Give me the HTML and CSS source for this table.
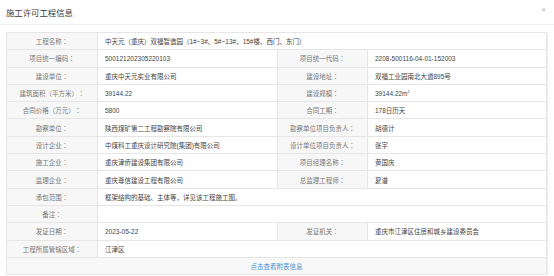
FILE: index.html
```html
<!DOCTYPE html>
<html lang="zh-CN">
<head>
<meta charset="utf-8">
<title>施工许可工程信息</title>
<link rel="stylesheet" href="styles.css">
</head>
<body>
<div class="dialog">
  <div class="dialog-head">
    <span class="dialog-title">施工许可工程信息</span>
    <span class="dialog-close">×</span>
  </div>
  <div class="dialog-body">
    <div class="info-grid">
      <div class="lbl">工程名称<span class="colon">：</span></div>
      <div class="val span3">中天元（重庆）双福智造园（1#~3#、5#~13#、15#楼、西门、东门）</div>

      <div class="lbl">项目统一编码<span class="colon">：</span></div>
      <div class="val">500121202305220103</div>
      <div class="lbl">项目统一代码<span class="colon">：</span></div>
      <div class="val">2208-500116-04-01-152003</div>

      <div class="lbl">建设单位<span class="colon">：</span></div>
      <div class="val">重庆中天元实业有限公司</div>
      <div class="lbl">建设地址<span class="colon">：</span></div>
      <div class="val">双福工业园南北大道895号</div>

      <div class="lbl">建筑面积（平方米）<span class="colon">：</span></div>
      <div class="val">39144.22</div>
      <div class="lbl">建设规模<span class="colon">：</span></div>
      <div class="val">39144.22m<sup>2</sup></div>

      <div class="lbl">合同价格（万元）<span class="colon">：</span></div>
      <div class="val">5800</div>
      <div class="lbl">合同工期<span class="colon">：</span></div>
      <div class="val">178日历天</div>

      <div class="lbl">勘察单位<span class="colon">：</span></div>
      <div class="val">陕西煤矿第二工程勘察院有限公司</div>
      <div class="lbl">勘察单位项目负责人<span class="colon">：</span></div>
      <div class="val">胡德计</div>

      <div class="lbl">设计企业<span class="colon">：</span></div>
      <div class="val">中煤科工重庆设计研究院(集团)有限公司</div>
      <div class="lbl">设计单位项目负责人<span class="colon">：</span></div>
      <div class="val">张宇</div>

      <div class="lbl">施工企业<span class="colon">：</span></div>
      <div class="val">重庆津侨建设集团有限公司</div>
      <div class="lbl">项目经理名称<span class="colon">：</span></div>
      <div class="val">黄国庆</div>

      <div class="lbl">监理企业<span class="colon">：</span></div>
      <div class="val">重庆尊信建设工程有限公司</div>
      <div class="lbl">总监理工程师<span class="colon">：</span></div>
      <div class="val">夏谱</div>

      <div class="lbl">承包范围<span class="colon">：</span></div>
      <div class="val span3">框架结构的基础、主体等，详见该工程施工图。</div>

      <div class="lbl">备注<span class="colon">：</span></div>
      <div class="val span3"></div>

      <div class="lbl">发证日期<span class="colon">：</span></div>
      <div class="val">2023-05-22</div>
      <div class="lbl">发证机关<span class="colon">：</span></div>
      <div class="val">重庆市江津区住房和城乡建设委员会</div>

      <div class="lbl">工程所属管辖区域<span class="colon">：</span></div>
      <div class="val span3">江津区</div>

      <div class="link-row span4"><a class="more-link" href="#">点击查看附表信息</a></div>
    </div>
  </div>
</div>
</body>
</html>
```

FILE: styles.css
```css
html, body {
  margin: 0;
  padding: 0;
  background: #ffffff;
}

body {
  font-family: "Liberation Sans", "Noto Sans CJK SC", sans-serif;
  color: #333333;
}

.dialog {
  width: 554px;
  height: 276px;
  overflow: hidden;
}

.dialog-head {
  height: 24px;
  border-bottom: 1px solid #f0f0f0;
  display: flex;
  align-items: center;
  justify-content: space-between;
  padding: 0 6px;
}

.dialog-title {
  font-size: 8.4px;
  color: #3a3a3a;
}

.dialog-close {
  font-size: 8px;
  color: #aaaaaa;
  margin-top: -6px;
  margin-right: 2px;
}

.dialog-body {
  padding: 7px 6px 0 6px;
}

.info-grid {
  width: 540px;
  display: grid;
  grid-template-columns: 91px 180px 90px 179px;
  grid-auto-rows: 17.3px;
  border-top: 1px solid #e6e6e6;
  border-left: 1px solid #e6e6e6;
  box-sizing: border-box;
  box-shadow: 2px 0 0 #eeeeee;
  font-size: 6.5px;
}

.lbl, .val, .link-row {
  border-right: 1px solid #e6e6e6;
  border-bottom: 1px solid #e6e6e6;
  display: flex;
  align-items: center;
  white-space: nowrap;
  overflow: hidden;
}

.lbl {
  background: #f7f7f7;
  color: #777777;
  justify-content: center;
}

.colon {
  font-family: "Noto Sans CJK TC", sans-serif;
}

.val {
  background: #ffffff;
  color: #444444;
  padding-left: 7px;
}

.val sup {
  font-size: 4px;
  align-self: flex-start;
  margin-top: 4px;
}

.span3 {
  grid-column: span 3;
}

.span4 {
  grid-column: span 4;
}

.link-row {
  background: #f8f8f8;
  justify-content: center;
}

.more-link {
  color: #4a90d0;
  text-decoration: none;
}
```
